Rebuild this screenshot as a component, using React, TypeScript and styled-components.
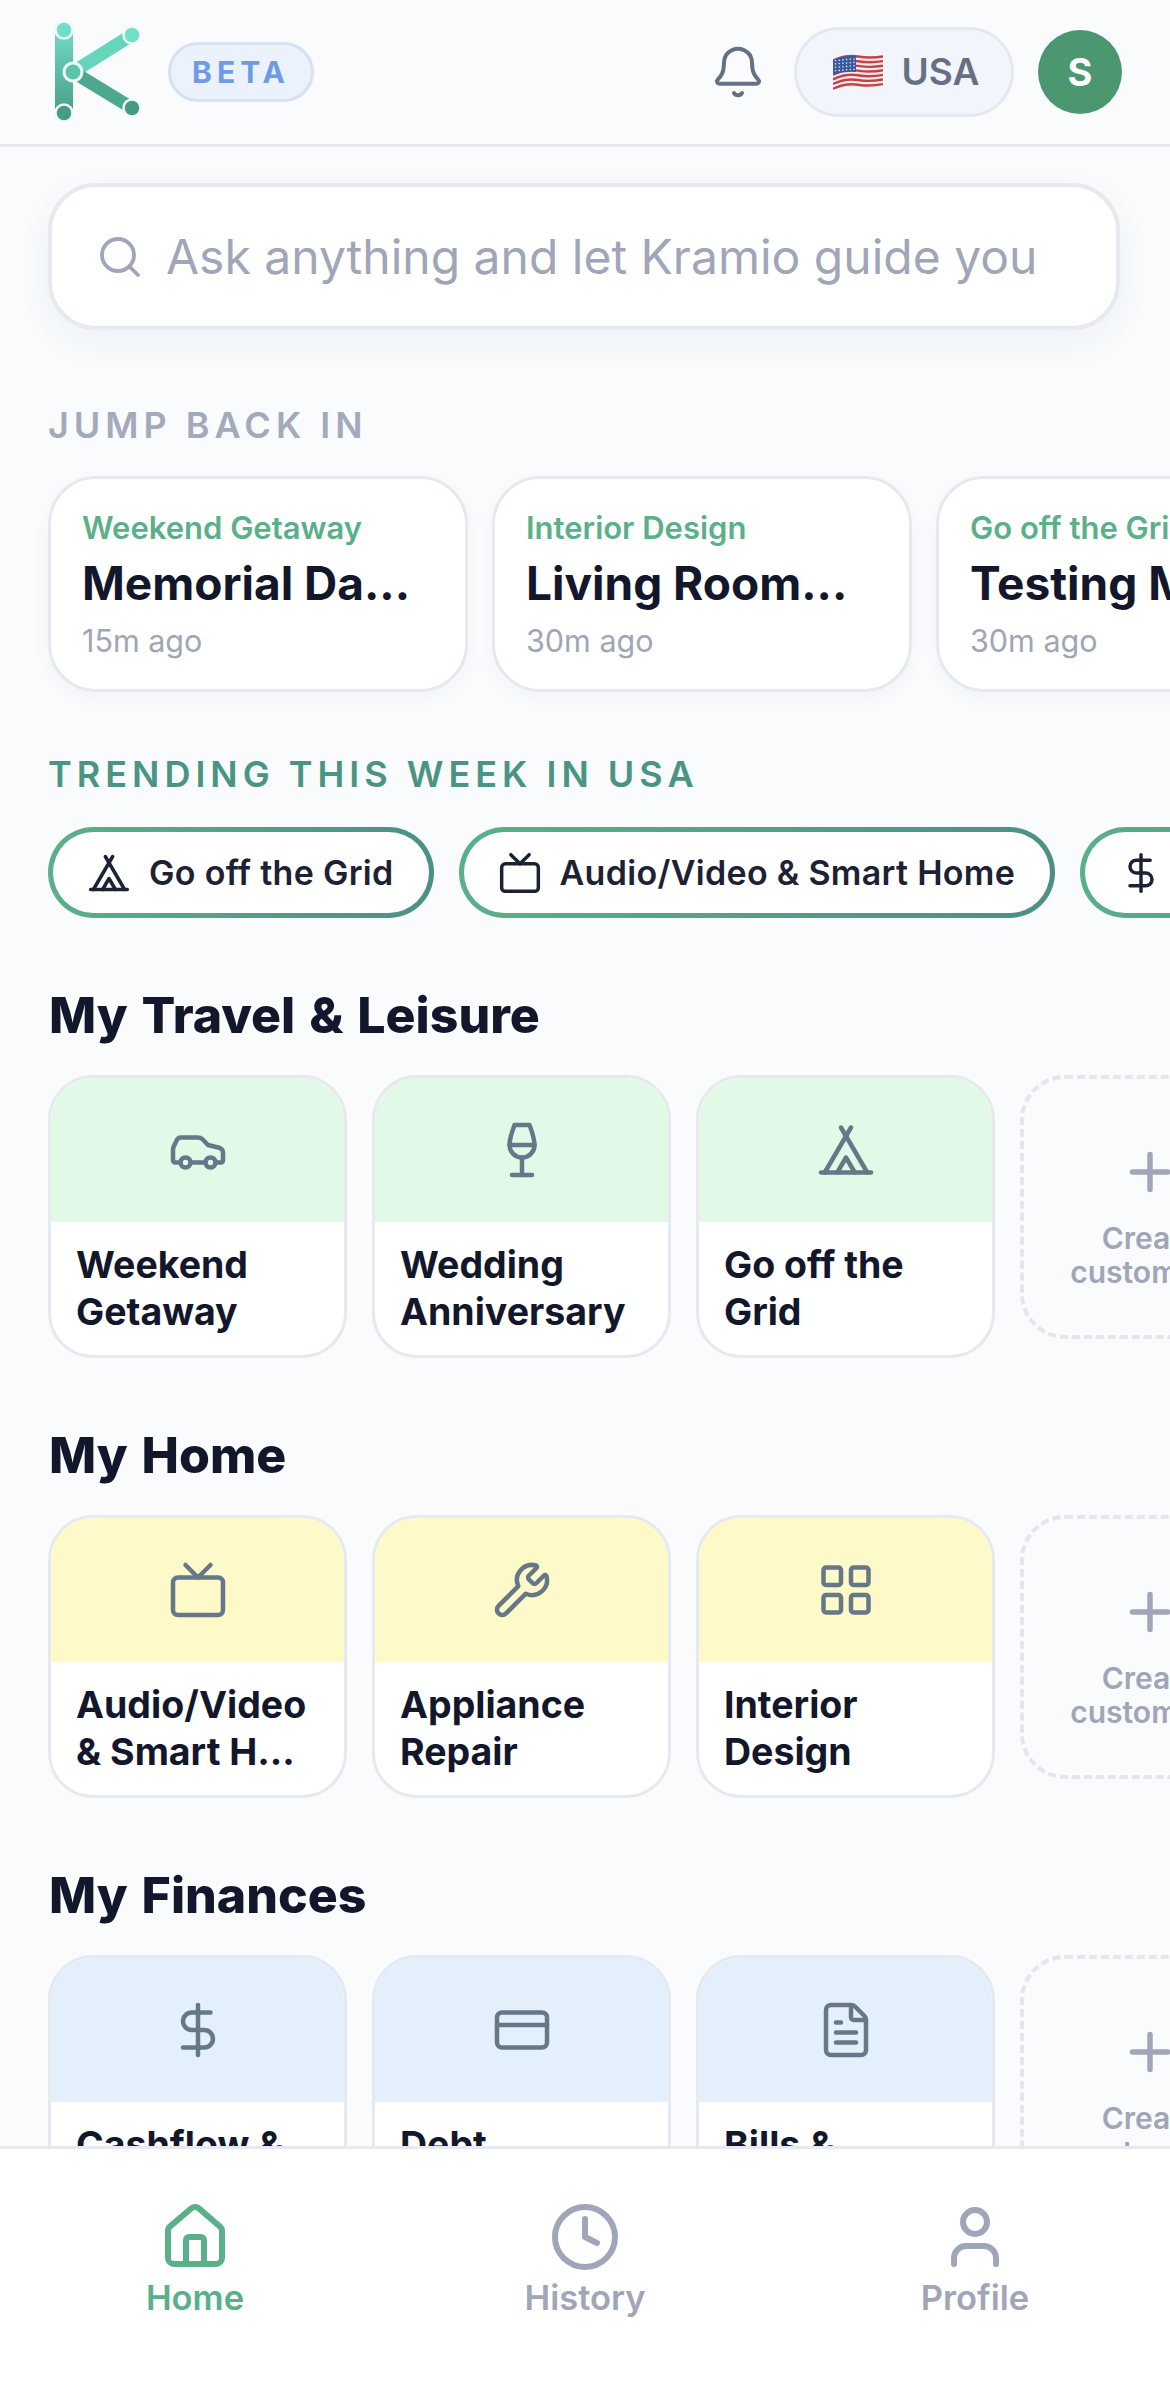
import React from "react";
import styled, { createGlobalStyle } from "styled-components";
import {
  Bell, Search, Tent, Tv, DollarSign, Car, Wine, Wrench, LayoutGrid, CreditCard, FileText, Plus, House, Clock, User,
} from "lucide-react";

const Global = createGlobalStyle`
  html, body { margin: 0; padding: 0; background: #f9fbfd; }
  * { box-sizing: border-box; }
  body { font-family: Inter, "Liberation Sans", sans-serif; }
`;

const Screen = styled.div`
  width: 1170px; height: 2391px; display: flex; flex-direction: column;
  background: #f9fbfd; overflow: hidden;
`;
const Header = styled.header`
  flex: none; height: 147px; display: flex; align-items: center;
  padding: 0 48px 1px 52px; border-bottom: 3px solid #e6e9ee;
`;
const Beta = styled.span`
  margin-left: 24px; width: 146px; height: 60px; display: flex; align-items: center; justify-content: center;
  border-radius: 30px; background: #ebf1fd; border: 3px solid #d6e1f6; color: #6f9ae6;
  font-size: 30px; font-weight: 700; letter-spacing: 5px;
`;
const Spacer = styled.div` flex: 1; `;
const BellWrap = styled.div` display: flex; color: #667085; margin-right: 28px; `;
const Region = styled.div`
  width: 220px; height: 90px; display: flex; align-items: center; justify-content: center; gap: 19px; padding-left: 4px;
  border-radius: 45px; background: #f2f5fb; border: 3px solid #e5e8ed; color: #667085;
  font-size: 37px; font-weight: 600;
`;
const Avatar = styled.div`
  margin-left: 24px; width: 84px; height: 84px; border-radius: 50%; background: #4a9770; color: #fff;
  display: flex; align-items: center; justify-content: center; font-size: 38px; font-weight: 700;
`;
const Main = styled.main`
  flex: 1; min-height: 0; overflow: hidden; padding: 36px 0 0 48px;
`;
const SearchBox = styled.div`
  width: 1072px; height: 147px; display: flex; align-items: center; gap: 22px; padding-left: 44px;
  background: #fff; border: 4px solid #e6e9ee; border-radius: 48px;
  box-shadow: 0 12px 36px rgba(30, 50, 80, 0.05);
  color: #a0a6b8; font-size: 48px; white-space: nowrap;
`;
const Eyebrow = styled.h2<{ $green?: boolean }>`
  margin: ${p => (p.$green ? "60px 0 31px" : "73px 0 29px")};
  font-size: 36px; line-height: 44px; font-weight: 600; letter-spacing: 5px;
  color: ${p => (p.$green ? "#4a9484" : "#a3aabd")};
`;
const Row = styled.div<{ $gap: number }>`
  display: flex; gap: ${p => p.$gap}px; width: 1200px;
`;
const RecentCard = styled.article`
  flex: none; width: 420px; height: 216px; padding: 30px 31px 0;
  background: #fff; border: 3px solid #e6e9ee; border-radius: 48px;
  box-shadow: 0 6px 18px rgba(30, 50, 80, 0.03);
`;
const RecentTag = styled.div`
  font-size: 31px; line-height: 38px; font-weight: 600; color: #5ab088; white-space: nowrap;
`;
const RecentTitle = styled.div`
  margin-top: 7px; font-size: 46px; line-height: 58px; font-weight: 700; color: #12172b; white-space: nowrap;
`;
const RecentTime = styled.div`
  margin-top: 11px; font-size: 30.5px; line-height: 36px; color: #a0a6b8;
`;
const Chip = styled.div`
  flex: none; height: 91px; display: flex; align-items: center; gap: 18px; padding: 0 35px 0 34px;
  border: 5px solid transparent; border-radius: 46px; white-space: nowrap;
  background: linear-gradient(#fff, #fff) padding-box, linear-gradient(90deg, #5ab088, #4c8f86) border-box;
  color: #1c2233; font-size: 34px; font-weight: 600; letter-spacing: 0.3px;
`;
const Heading = styled.h2`
  margin: 67px 0 30px 1px;
  font-size: 50px; line-height: 60px; font-weight: 800; color: #12172b; word-spacing: 3px;
`;
const Topic = styled.article`
  flex: none; width: 299px; height: 283px; background: #fff;
  border: 3px solid #e6e9ee; border-radius: 45px; overflow: hidden;
`;
const Band = styled.div<{ $tone: string }>`
  height: 144px; display: flex; align-items: center; justify-content: center;
  background: ${p => p.$tone}; color: #667788;
`;
const TopicName = styled.div`
  margin: 19px 20px 0 25px; font-size: 37.5px; line-height: 47px; font-weight: 700; color: #12172b;
`;
const Create = styled.div`
  flex: none; width: 260px; height: 264px; display: flex; flex-direction: column; align-items: center;
  padding: 63px 30px 0; border: 4px dashed #e3e6ec; border-radius: 45px;
  color: #a0a6b8; font-size: 30px; line-height: 34px; font-weight: 600; text-align: center;
`;
const CreateLabel = styled.div` margin-top: 19px; `;
const Nav = styled.nav`
  flex: none; height: 245px; display: grid; grid-template-columns: repeat(3, 1fr);
  padding-top: 52px; background: #fff; border-top: 3px solid #e6e9ee;
`;
const NavItem = styled.div<{ $active?: boolean }>`
  display: flex; flex-direction: column; align-items: center;
  color: ${p => (p.$active ? "#5ab088" : "#a0a6b8")};
  font-size: 34.5px; line-height: 40px; font-weight: 600;
`;
const NavLabel = styled.span` margin-top: 5px; `;

const Logo = () => (
  <svg width="92" height="100" viewBox="52 22 92 100" aria-label="Kramio">
    <defs>
      <linearGradient id="kg" x1="0" y1="0" x2="0" y2="1">
        <stop offset="0" stopColor="#70dfc5" />
        <stop offset="1" stopColor="#479a84" />
      </linearGradient>
    </defs>
    <rect x="55" y="25" width="18" height="94" rx="7" fill="url(#kg)" />
    <path d="M73 72 132 35" stroke="#66d5bb" strokeWidth="13" fill="none" />
    <path d="M73 72 132 108" stroke="#4da890" strokeWidth="13" fill="none" />
    <circle cx="64" cy="30" r="8.5" fill="#6fdfc6" stroke="#eefaf7" strokeWidth="2.5" />
    <circle cx="64" cy="113" r="8.5" fill="#479a84" stroke="#eefaf7" strokeWidth="2.5" />
    <circle cx="132" cy="35" r="8.5" fill="#6fdfc6" stroke="#eefaf7" strokeWidth="2.5" />
    <circle cx="132" cy="108" r="8.5" fill="#479a84" stroke="#eefaf7" strokeWidth="2.5" />
    <circle cx="73" cy="72" r="9" fill="#5cc4ad" stroke="#eefaf7" strokeWidth="3" />
  </svg>
);

const Flag = () => {
  const stripes = [0, 1, 2, 3, 4, 5, 6];
  return (
    <svg width="50" height="38" viewBox="0 0 50 38" aria-label="US flag">
      <path d="M0 7Q13 1 25 3T50 3V32Q37 29 25 32T0 36Z" fill="#f6ecec" />
      {stripes.map(i => (
        <path
          key={i}
          d={`M0 ${7.5 + i * 4.7}Q13 ${1.5 + i * 4.7} 25 ${3.5 + i * 4.7}T50 ${3.5 + i * 4.6}`}
          stroke="#c5404a"
          strokeWidth="2.4"
          fill="none"
        />
      ))}
      <path d="M0 7Q11 2 23 3V19Q11 18 0 22Z" fill="#3a5a9e" />
      {[0, 1, 2, 3].flatMap(r =>
        [0, 1, 2, 3, 4, 5].map(c => (
          <circle key={`${r}-${c}`} cx={2.5 + c * 3.7} cy={7.5 + r * 3.4 - c * 0.3} r="0.8" fill="#dfe6f5" />
        ))
      )}
    </svg>
  );
};

const recents = [
  { tag: "Weekend Getaway", title: "Memorial Da...", time: "15m ago" },
  { tag: "Interior Design", title: "Living Room...", time: "30m ago" },
  { tag: "Go off the Grid", title: "Testing M...", time: "30m ago" },
];

const sections = [
  {
    name: "My Travel & Leisure", tone: "#e3f9e7",
    items: [
      { icon: Car, name: "Weekend Getaway" },
      { icon: Wine, name: "Wedding Anniversary" },
      { icon: Tent, name: "Go off the Grid" },
    ],
  },
  {
    name: "My Home", tone: "#fdf9c8",
    items: [
      { icon: Tv, name: "Audio/Video & Smart H..." },
      { icon: Wrench, name: "Appliance Repair" },
      { icon: LayoutGrid, name: "Interior Design" },
    ],
  },
  {
    name: "My Finances", tone: "#e3f0fc",
    items: [
      { icon: DollarSign, name: "Cashflow & Budgeting" },
      { icon: CreditCard, name: "Debt Management" },
      { icon: FileText, name: "Bills & Subscriptions" },
    ],
  },
];

export default function App() {
  return (
    <Screen>
      <Global />
      <Header>
        <Logo />
        <Beta>BETA</Beta>
        <Spacer />
        <BellWrap><Bell size={56} strokeWidth={1.7} /></BellWrap>
        <Region><Flag />USA</Region>
        <Avatar>S</Avatar>
      </Header>
      <Main>
        <SearchBox>
          <Search size={48} strokeWidth={1.9} />
          Ask anything and let Kramio guide you
        </SearchBox>
        <Eyebrow>JUMP BACK IN</Eyebrow>
        <Row $gap={24}>
          {recents.map(r => (
            <RecentCard key={r.tag}>
              <RecentTag>{r.tag}</RecentTag>
              <RecentTitle>{r.title}</RecentTitle>
              <RecentTime>{r.time}</RecentTime>
            </RecentCard>
          ))}
        </Row>
        <Eyebrow $green>TRENDING THIS WEEK IN USA</Eyebrow>
        <Row $gap={25}>
          <Chip><Tent size={44} strokeWidth={1.9} />Go off the Grid</Chip>
          <Chip><Tv size={44} strokeWidth={1.9} />Audio/Video &amp; Smart Home</Chip>
          <Chip><DollarSign size={44} strokeWidth={1.9} />Cashflow</Chip>
        </Row>
        {sections.map(s => (
          <section key={s.name}>
            <Heading>{s.name}</Heading>
            <Row $gap={25}>
              {s.items.map(it => (
                <Topic key={it.name}>
                  <Band $tone={s.tone}><it.icon size={60} strokeWidth={1.8} /></Band>
                  <TopicName>{it.name}</TopicName>
                </Topic>
              ))}
              <Create>
                <Plus size={60} strokeWidth={2.2} />
                <CreateLabel>Create custom tile</CreateLabel>
              </Create>
            </Row>
          </section>
        ))}
      </Main>
      <Nav>
        <NavItem $active><House size={72} strokeWidth={2} /><NavLabel>Home</NavLabel></NavItem>
        <NavItem><Clock size={72} strokeWidth={2} /><NavLabel>History</NavLabel></NavItem>
        <NavItem><User size={72} strokeWidth={2} /><NavLabel>Profile</NavLabel></NavItem>
      </Nav>
    </Screen>
  );
}
